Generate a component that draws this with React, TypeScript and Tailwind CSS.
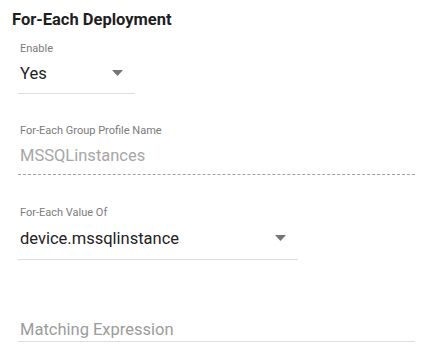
import React from 'react';

const Caret: React.FC = () => (
  <svg width="11" height="6" viewBox="0 0 11 6" className="block mb-[3px]">
    <path d="M0 0 L11 0 L5.5 6 Z" fill="#757575" />
  </svg>
);

interface FieldProps {
  label?: string;
  value: string;
  width: string;
  row: string; // padding of the value row
  select?: boolean;
  tone?: 'normal' | 'disabled' | 'placeholder';
  dashed?: boolean;
}

const Field: React.FC<FieldProps> = ({ label, value, width, row, select, tone = 'normal', dashed }) => {
  const color =
    tone === 'disabled' ? 'text-[#a6a6a6]' : tone === 'placeholder' ? 'text-[#9b9b9b]' : 'text-[#222222]';
  return (
    <div className={`${width} flex flex-col`}>
      {label && <div className="text-[11px] leading-[14px] text-[#7b7b7b] pl-[2px]">{label}</div>}
      <div
        className={`flex items-center justify-between pl-[2px] pr-[12px] border-b ${row} ${
          dashed ? 'border-dashed border-[#a0a0a0]' : 'border-[#dddddd]'
        }`}
      >
        <span className={`text-[16.5px] leading-[20px] ${color}`}>{value}</span>
        {select && <Caret />}
      </div>
    </div>
  );
};

const App: React.FC = () => {
  return (
    <div
      className="w-[442px] h-[358px] bg-white overflow-hidden"
      style={{ fontFamily: 'Roboto, "Liberation Sans", sans-serif' }}
    >
      <div className="pt-[10px] pl-[12px]">
        <h2 className="text-[16.5px] leading-[20px] font-bold text-[#1f1f1f]">For-Each Deployment</h2>
      </div>
      <div className="pl-[18px] pt-[12px] flex flex-col">
        <Field label="Enable" value="Yes" width="w-[117px]" row="pt-[8px] pb-[9px]" select />
        <div className="mt-[30px]">
          <Field
            label="For-Each Group Profile Name"
            value="MSSQLinstances"
            width="w-[397px]"
            row="pt-[8px] pb-[8px]"
            tone="disabled"
            dashed
          />
        </div>
        <div className="mt-[31px]">
          <Field
            label="For-Each Value Of"
            value="device.mssqlinstance"
            width="w-[280px]"
            row="pt-[9px] pb-[10px]"
            select
          />
        </div>
        <div className="mt-[60px]">
          <Field value="Matching Expression" width="w-[397px]" row="pt-0 pb-[1px]" tone="placeholder" />
        </div>
      </div>
    </div>
  );
};

export default App;
